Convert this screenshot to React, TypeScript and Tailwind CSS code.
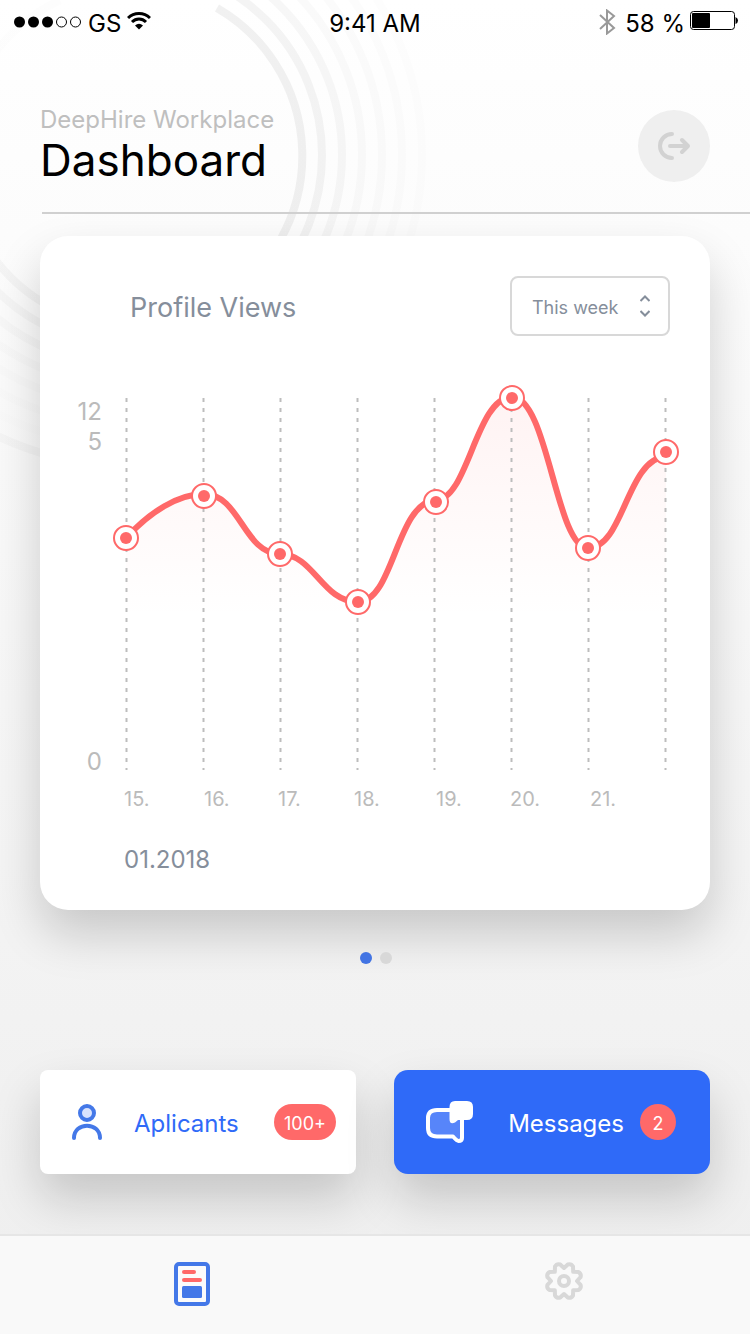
import React from "react";

const rings = [
  { r: 191, opacity: 0.042 },
  { r: 211, opacity: 0.032 },
  { r: 231, opacity: 0.02 },
  { r: 251, opacity: 0.014 },
  { r: 271, opacity: 0.01 },
  { r: 291, opacity: 0.008 },
];

function Rings() {
  return (
    <svg aria-hidden="true" className="pointer-events-none absolute left-0 top-0" width="460" height="500" fill="none" stroke="url(#ring)" strokeWidth="8">
      <defs>
        <linearGradient id="ring" gradientUnits="userSpaceOnUse" x1="0" y1="0" x2="200" y2="0">
          <stop offset="0" stopColor="#000" stopOpacity="0.55" />
          <stop offset="1" stopColor="#000" />
        </linearGradient>
      </defs>
      <path d="M-20 77 A171 171 0 0 1 60 0" strokeOpacity="0.012" />
      <path d="M217 8 A171 171 0 1 1 -38 180" strokeOpacity="0.055" />
      {rings.map(({ r, opacity }) => (
        <path key={r} d={`M131 ${155 - r} A${r} ${r} 0 1 1 ${131 - r} 155`} strokeOpacity={opacity} />
      ))}
      <path d="M-20 427 A311 311 0 0 0 60 458" strokeOpacity="0.04" />
    </svg>
  );
}

function StatusBar() {
  return (
    <div className="relative grid h-12 grid-cols-3 items-center px-3 text-2xl leading-6 text-black">
      <div className="flex items-center gap-1.5">
        <svg width="70" height="16" viewBox="0 0 70 16" aria-label="Signal">
          <circle cx="7.500" cy="6" r="5.500" />
          <circle cx="21.500" cy="6" r="5.500" />
          <circle cx="35.500" cy="6" r="5.500" />
          <circle cx="49.500" cy="6" r="5" fill="none" stroke="#000" />
          <circle cx="63.500" cy="6" r="5" fill="none" stroke="#000" />
        </svg>
        <span>GS</span>
        <svg width="24" height="18" viewBox="0 0 24 18" aria-label="Wi-Fi" className="mb-1.5">
          <path d="M1 6 C7 0 17 0 23 6" fill="none" stroke="#000" strokeWidth="3" />
          <path d="M5 10 C9 6 15 6 19 10" fill="none" stroke="#000" strokeWidth="3" />
          <path d="M8 13.500 Q12 10 16 13.500 L12 17.500 Z" />
        </svg>
      </div>
      <div className="text-center">9:41 AM</div>
      <div className="flex items-center justify-end gap-1 whitespace-nowrap">
        <svg width="20" height="26" viewBox="0 0 20 26" fill="none" stroke="#999" strokeWidth="2" aria-label="Bluetooth" className="mb-1 mr-1">
          <path d="M3 6 L17 19 L10 24.500 V1.500 L17 7 L3 20" />
        </svg>
        <span>58 %</span>
        <svg width="49" height="20" viewBox="0 0 49 20" aria-label="Battery" className="mb-2">
          <rect x="1.500" y="1.500" width="44" height="18" rx="3" fill="#fff" stroke="#000" />
          <rect x="3" y="3" width="18" height="15" rx="1" />
          <path d="M46.500 7 Q49 8 49 10.500 Q49 13 46.500 14 Z" />
        </svg>
      </div>
    </div>
  );
}

const points = [
  [86, 162],
  [164, 120],
  [240, 178],
  [318, 226],
  [396, 126],
  [472, 22],
  [548, 172],
  [626, 76],
];

const curve =
  "M86 162 C110 136 138 118 164 118 C200 118 204 178 240 178 C274 178 282 226 318 226 C354 226 356 126 396 124 C428 124 436 21 472 21 C508 21 516 172 548 172 C584 172 586 84 626 80";

const days = [
  { label: "15.", x: 84 },
  { label: "16.", x: 164 },
  { label: "17.", x: 238 },
  { label: "18.", x: 314 },
  { label: "19.", x: 396 },
  { label: "20.", x: 470 },
  { label: "21.", x: 550 },
];

function ViewsChart() {
  return (
    <svg viewBox="0 0 670 444" className="mt-10 block w-full" role="img" aria-label="Profile views by day">
      <defs>
        <linearGradient id="area" gradientUnits="userSpaceOnUse" x1="0" y1="22" x2="0" y2="240">
          <stop offset="0" stopColor="#ff6969" stopOpacity="0.08" />
          <stop offset="1" stopColor="#ff6969" stopOpacity="0" />
        </linearGradient>
      </defs>
      <path d={curve + " V394 H86 Z"} fill="url(#area)" />
      {points.map((_, i) => (
        <line key={i} x1={86.5 + 77 * i} x2={86.5 + 77 * i} y1="22" y2="394" stroke="#bdbdbd" strokeWidth="2" strokeDasharray="4 6" />
      ))}
      <path d={curve} fill="none" stroke="#ff6969" strokeWidth="6" />
      {points.map(([x, y]) => (
        <g key={x}>
          <circle cx={x} cy={y} r="12" fill="#fff" stroke="#ff6969" strokeWidth="2" />
          <circle cx={x} cy={y} r="6" fill="#ff6969" />
        </g>
      ))}
      <g fill="#bbbbbb" fontSize="24" textAnchor="end">
        <text x="62" y="44">12</text>
        <text x="62" y="74">5</text>
        <text x="62" y="394">0</text>
      </g>
      <g fill="#bbbbbb" fontSize="20">
        {days.map((day) => (
          <text key={day.label} x={day.x} y="430">{day.label}</text>
        ))}
      </g>
    </svg>
  );
}

function gearPath() {
  const out: string[] = [];
  const at = (deg: number, r: number) => {
    const a = (deg * Math.PI) / 180;
    return `${(20 + r * Math.cos(a)).toFixed(2)} ${(20 + r * Math.sin(a)).toFixed(2)}`;
  };
  for (let k = 0; k < 8; k++) {
    const base = k * 45;
    out.push(`${k === 0 ? "M" : "L"}${at(base, 13)} L${at(base + 13, 17)} Q${at(base + 22.5, 19)} ${at(base + 32, 17)}`);
  }
  return out.join(" ") + " Z";
}

export default function App() {
  return (
    <div className="relative flex min-h-screen flex-col overflow-hidden bg-linear-to-b from-white to-[#eeeeee] font-['Inter','Liberation_Sans',sans-serif]">
      <Rings />
      <StatusBar />

      <header className="relative ml-[42px] flex items-center justify-between border-b-2 border-[#d0d0d0] pb-7 pr-10 pt-15">
        <div className="-ml-0.5">
          <p className="text-2xl leading-6 text-[#bfbfbf]">DeepHire Workplace</p>
          <h1 className="mt-1 text-[44px] leading-12 text-black">Dashboard</h1>
        </div>
        <button type="button" aria-label="Log out" className="flex size-18 items-center justify-center rounded-full bg-[#efefef]">
          <svg width="34" height="30" viewBox="0 0 34 30" fill="none" stroke="#d2d2d2" strokeWidth="4" strokeLinecap="round" strokeLinejoin="round">
            <path d="M15 3 A12 12 0 0 0 15 27 M13 15 H31 M25 9 L31 15 L25 21" />
          </svg>
        </button>
      </header>

      <main className="relative flex flex-col px-10 pt-[22px]">
        <section className="rounded-[28px] bg-white pb-[34px] pt-10 shadow-[0_24px_48px_rgba(0,0,0,0.18)]">
          <div className="flex items-center justify-between pl-[90px] pr-10">
            <h2 className="pt-1 text-[27px] leading-9 text-[#858e9b]">Profile Views</h2>
            <div className="relative">
              <select aria-label="Period" className="h-15 w-40 appearance-none rounded-lg border-2 border-[#d8d8d8] bg-white pl-5 pt-1 text-lg text-[#858e9b]">
                <option>This week</option>
                <option>This month</option>
              </select>
              <svg aria-hidden="true" className="pointer-events-none absolute right-5 top-[18px]" width="10" height="24" viewBox="0 0 10 24" fill="none" stroke="#858e9b" strokeWidth="2">
                <path d="M0.500 7 L5 2.500 L9.500 7 M0.500 17 L5 21.500 L9.500 17" />
              </svg>
            </div>
          </div>
          <ViewsChart />
          <p className="mt-6 pl-[84px] text-2xl leading-8 text-[#858e9b]">01.2018</p>
        </section>

        <div className="mr-[-2px] mt-[42px] flex justify-center gap-2">
          <button type="button" aria-label="Page 1" className="size-3 rounded-full bg-[#4274e3]" />
          <button type="button" aria-label="Page 2" className="size-3 rounded-full bg-[#d8d8d8]" />
        </div>

        <div className="mt-[106px] grid grid-cols-2 gap-[38px] text-2xl">
          <button type="button" className="flex h-26 items-center rounded-lg bg-white pl-8 pr-5 text-[#2f6af8] shadow-[0_24px_48px_rgba(0,0,0,0.18)]">
            <svg width="30" height="36" viewBox="0 0 30 36" fill="none" stroke="#4478e8" strokeWidth="4" strokeLinecap="round" aria-hidden="true">
              <circle cx="15" cy="9" r="7" fill="#dae3fd" />
              <path d="M2 34 C2 17.500 28 17.500 28 34" />
            </svg>
            <span className="ml-8 pt-1">Aplicants</span>
            <span className="ml-auto flex h-9 w-[62px] items-center justify-center rounded-full bg-[#ff6969] pt-1 text-lg text-white">100+</span>
          </button>
          <button type="button" className="flex h-26 items-center rounded-[14px] bg-[#2f6af8] pl-8 pr-[34px] text-white shadow-[0_24px_48px_rgba(0,0,0,0.18)]">
            <svg width="48" height="44" viewBox="0 0 48 44" aria-hidden="true">
              <path d="M11 10 H36 V38 Q36 41 32.500 41 Q31 41 27 36.500 H11 Q2 36.500 2 28 V18 Q2 10 11 10 Z" fill="#5785fa" stroke="#fff" strokeWidth="4" strokeLinejoin="round" />
              <path d="M29 1 H41 Q47 1 47 7 V14 Q47 20 41 20 H32 L29 22.500 Q23.500 25 23.500 19 V7 Q23.500 1 29 1 Z" fill="#fff" />
            </svg>
            <span className="ml-auto pt-1">Messages</span>
            <span className="ml-4 flex size-9 items-center justify-center rounded-full bg-[#ff6969] pt-1 text-lg">2</span>
          </button>
        </div>
      </main>

      <nav className="relative mt-auto grid h-25 grid-cols-2 items-center border-t-2 border-[#e6e6e6] bg-[#f9f9f9] pl-1.5">
        <a href="#dashboard" aria-label="Dashboard" className="mb-0.5 justify-self-center">
          <svg width="36" height="44" viewBox="0 0 36 44">
            <rect x="2" y="2" width="32" height="40" rx="3" fill="#fbfbfb" stroke="#4478e8" strokeWidth="4" />
            <rect x="8" y="8" width="14" height="4" rx="2" fill="#ff6969" />
            <rect x="8" y="16" width="20" height="4" rx="2" fill="#ff6969" />
            <rect x="8" y="24" width="20" height="12" rx="1.500" fill="#4478e8" />
          </svg>
        </a>
        <a href="#settings" aria-label="Settings" className="mb-2 justify-self-center">
          <svg width="40" height="40" viewBox="0 0 40 40" fill="none" stroke="#d8d8d8" strokeWidth="4" strokeLinejoin="round">
            <path d={gearPath()} />
            <circle cx="20" cy="20" r="5" />
          </svg>
        </a>
      </nav>
    </div>
  );
}
